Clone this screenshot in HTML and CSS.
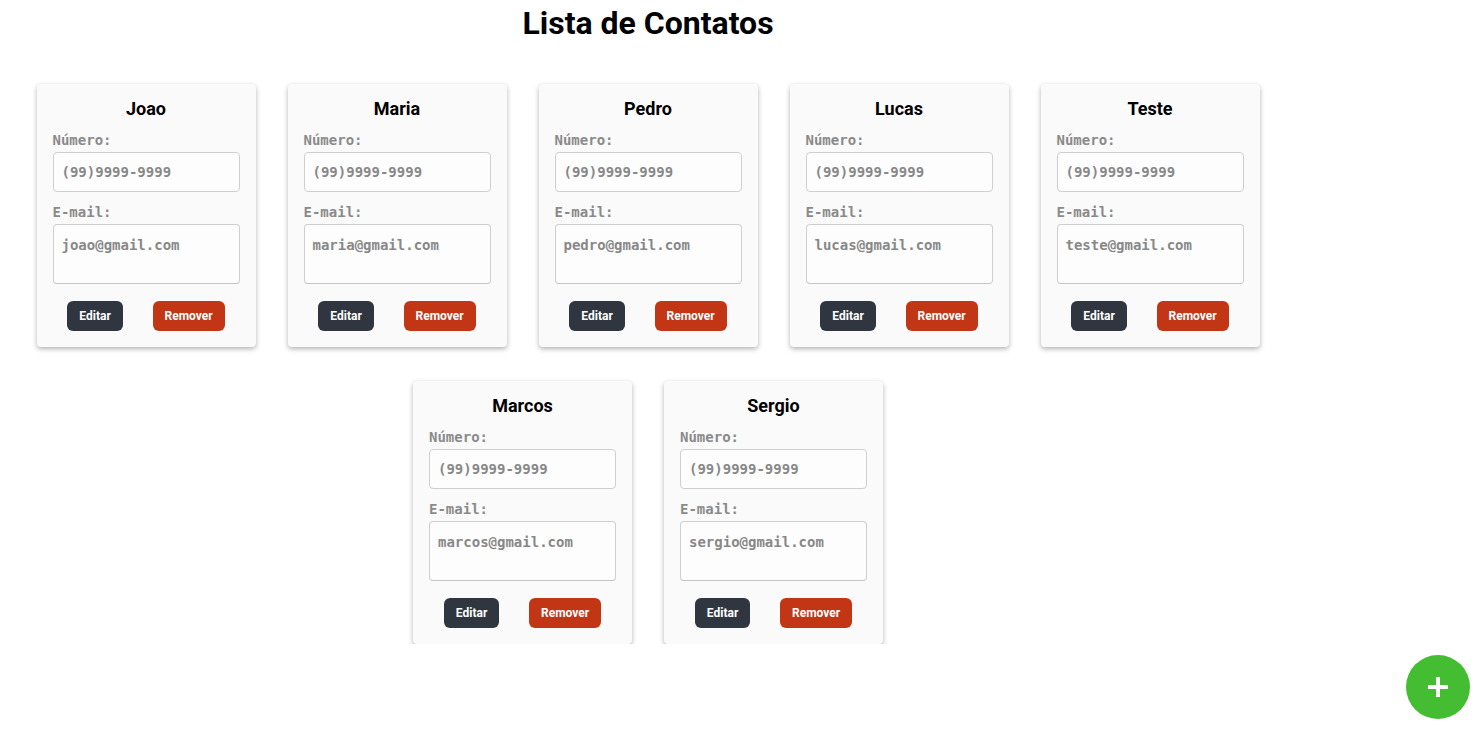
FILE: index.html
```html
<!DOCTYPE html>
<html lang="pt-BR">
<head>
<meta charset="utf-8">
<title>Lista de Contatos</title>
<link rel="stylesheet" href="styles.css">
</head>
<body>
<div class="page">
  <h1 class="title">Lista de Contatos</h1>
  <div class="grid">
    <div class="card">
      <h2 class="name">Joao</h2>
      <label class="label">Número:</label>
      <input class="field" type="text" value="(99)9999-9999">
      <label class="label">E-mail:</label>
      <textarea class="field area">joao@gmail.com</textarea>
      <div class="actions"><button class="btn edit">Editar</button><button class="btn remove">Remover</button></div>
    </div>
    <div class="card">
      <h2 class="name">Maria</h2>
      <label class="label">Número:</label>
      <input class="field" type="text" value="(99)9999-9999">
      <label class="label">E-mail:</label>
      <textarea class="field area">maria@gmail.com</textarea>
      <div class="actions"><button class="btn edit">Editar</button><button class="btn remove">Remover</button></div>
    </div>
    <div class="card">
      <h2 class="name">Pedro</h2>
      <label class="label">Número:</label>
      <input class="field" type="text" value="(99)9999-9999">
      <label class="label">E-mail:</label>
      <textarea class="field area">pedro@gmail.com</textarea>
      <div class="actions"><button class="btn edit">Editar</button><button class="btn remove">Remover</button></div>
    </div>
    <div class="card">
      <h2 class="name">Lucas</h2>
      <label class="label">Número:</label>
      <input class="field" type="text" value="(99)9999-9999">
      <label class="label">E-mail:</label>
      <textarea class="field area">lucas@gmail.com</textarea>
      <div class="actions"><button class="btn edit">Editar</button><button class="btn remove">Remover</button></div>
    </div>
    <div class="card">
      <h2 class="name">Teste</h2>
      <label class="label">Número:</label>
      <input class="field" type="text" value="(99)9999-9999">
      <label class="label">E-mail:</label>
      <textarea class="field area">teste@gmail.com</textarea>
      <div class="actions"><button class="btn edit">Editar</button><button class="btn remove">Remover</button></div>
    </div>
    <div class="card">
      <h2 class="name">Marcos</h2>
      <label class="label">Número:</label>
      <input class="field" type="text" value="(99)9999-9999">
      <label class="label">E-mail:</label>
      <textarea class="field area">marcos@gmail.com</textarea>
      <div class="actions"><button class="btn edit">Editar</button><button class="btn remove">Remover</button></div>
    </div>
    <div class="card">
      <h2 class="name">Sergio</h2>
      <label class="label">Número:</label>
      <input class="field" type="text" value="(99)9999-9999">
      <label class="label">E-mail:</label>
      <textarea class="field area">sergio@gmail.com</textarea>
      <div class="actions"><button class="btn edit">Editar</button><button class="btn remove">Remover</button></div>
    </div>
  </div>
</div>
<button class="fab" aria-label="Adicionar contato">
  <svg width="24" height="24" viewBox="0 0 24 24"><path d="M12 2v20M2 12h20" stroke="#fff" stroke-width="4" fill="none"/></svg>
</button>
</body>
</html>
```
FILE: styles.css
```css
html, body {
  margin: 0;
  padding: 0;
  background: #ffffff;
  font-family: Roboto, "Liberation Sans", sans-serif;
}
.page {
  width: 1296px;
}
.title {
  margin: 4px 0 0;
  font-size: 32px;
  font-weight: 700;
  text-align: center;
  color: #000;
  line-height: 38px;
}
.grid {
  margin-top: 42px;
  display: flex;
  flex-wrap: wrap;
  justify-content: center;
  gap: 34px 32px;
}
.card {
  width: 219px;
  height: 263px;
  box-sizing: border-box;
  padding: 14px 16px 0;
  background: #fafafa;
  border-radius: 4px;
  box-shadow: 0 2px 5px rgba(0, 0, 0, 0.3);
  display: flex;
  flex-direction: column;
}
.name {
  margin: 0;
  font-size: 18px;
  font-weight: 700;
  line-height: 22px;
  text-align: center;
  color: #000;
}
.label {
  margin-top: 12px;
  font-family: "DejaVu Sans Mono", "Liberation Mono", monospace;
  font-size: 14px;
  font-weight: 700;
  line-height: 16px;
  color: #8a8a8a;
}
.label + .field {
  margin-top: 4px;
}
.field {
  box-sizing: border-box;
  width: 187px;
  height: 40px;
  padding: 0 8px;
  border: 1px solid #cfcfcf;
  border-radius: 4px;
  background: #fdfdfd;
  font-family: "DejaVu Sans Mono", "Liberation Mono", monospace;
  font-size: 14px;
  font-weight: 700;
  color: #888888;
  outline: none;
}
.field + .label {
  margin-top: 12px;
}
.area {
  height: 60px;
  padding: 12px 8px 0;
  line-height: 17px;
  resize: none;
  overflow: hidden;
  border-bottom-color: #c4c4c4;
}
.actions {
  margin-top: 17px;
  display: flex;
  justify-content: space-around;
}
.btn {
  height: 30px;
  padding: 0 12px;
  border: none;
  border-radius: 6px;
  font-family: Roboto, "Liberation Sans", sans-serif;
  font-size: 12px;
  font-weight: 700;
  color: #fff;
  cursor: pointer;
}
.edit {
  background: #2f3640;
}
.remove {
  background: #c23616;
}
.fab {
  position: fixed;
  right: 9px;
  bottom: 13px;
  width: 64px;
  height: 64px;
  border: none;
  border-radius: 50%;
  background: #44bd32;
  display: flex;
  align-items: center;
  justify-content: center;
  padding: 0;
}
```
